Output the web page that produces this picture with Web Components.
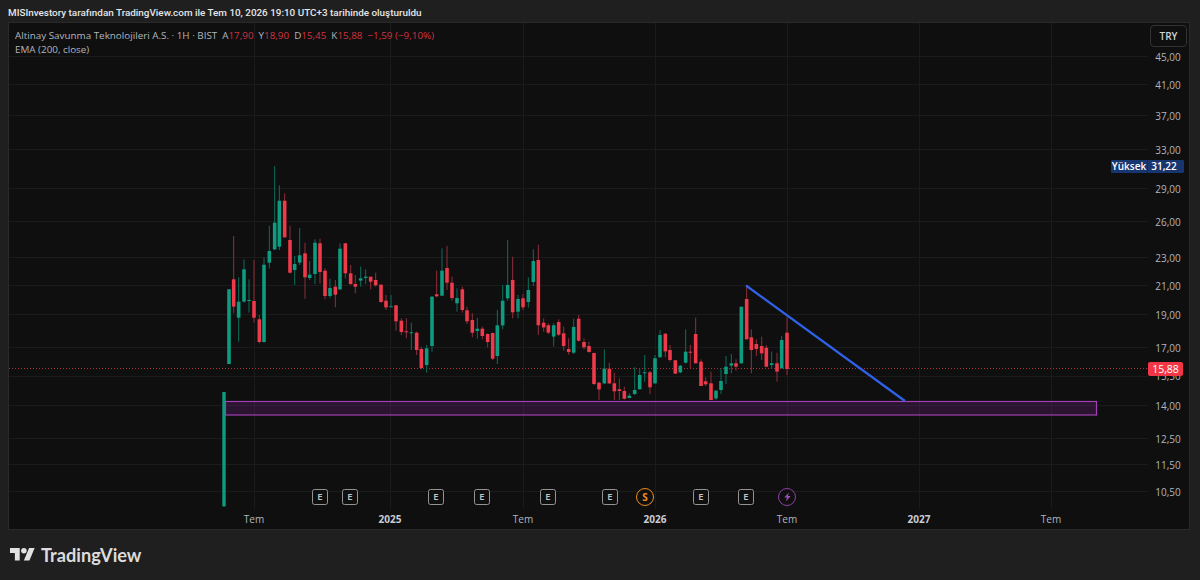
<!DOCTYPE html>
<html lang="tr"><head><meta charset="utf-8"><title>TradingView</title>
<style>html,body{margin:0;height:580px;overflow:hidden;background:#1f1f1f}</style></head>
<body><tv-page>
<tv-header>MISInvestory tarafından TradingView.com ile Tem 10, 2026 19:10 UTC+3 tarihinde oluşturuldu</tv-header>
<tv-chart></tv-chart>
<tv-footer></tv-footer>
</tv-page>
<script>
const FONT='"Open Sans","Noto Sans",sans-serif';
function el(name,css,html,fn){customElements.define(name,class extends HTMLElement{connectedCallback(){if(this.shadowRoot)return;const r=this.attachShadow({mode:'open'});r.innerHTML='<style>'+css+'</style>'+html(this);if(fn)fn(r,this);}});}
el('tv-page',`:host{display:flex;flex-direction:column;width:1200px;height:580px;box-sizing:border-box;padding:0 10px 0 8px;font-family:${FONT};color:#d1d4dc}`,()=>'<slot></slot>');
el('tv-header',`:host{display:flex;align-items:center;height:22px;box-sizing:border-box;padding-top:3px;font:500 9.9px Roboto,${FONT};color:#e6e6e6;white-space:nowrap}`,()=>'<slot></slot>');
el('tv-footer',`:host{display:flex;align-items:center;gap:6px;height:50px;padding-left:2px}svg{width:25px;height:20px;fill:#e2e2e2;display:block}span{font:700 18.2px Lato,"Open Sans",sans-serif;color:#dcdcdc;letter-spacing:0}`,
()=>'<svg viewBox="0 0 36 28"><path d="M14 22H7V11H0V4h14v18ZM28 22h-8l7.5-18h8L28 22Z"/><circle cx="20" cy="8" r="4"/></svg><span>TradingView</span>');
el('tv-legend',`:host{position:absolute;left:6px;top:5px;display:block;font:400 9.85px/14px ${FONT};color:#b2b5be;white-space:nowrap}b{font-weight:400;color:#cf3343}i{font-style:normal;margin-left:5px}`,
()=>'<div>Altinay Savunma Teknolojileri A.S. · 1H · BIST<i>A</i><b>17,90</b><i>Y</i><b>18,90</b><i>D</i><b>15,45</b><i>K</i><b>15,88</b><i></i><b>−1,59 (−9,10%)</b></div><div>EMA (200, close)</div>');
const PRICES=[['45,00',56],['41,00',84],['37,00',115],['33,00',149],['29,00',188],['26,00',221],['23,00',257],['21,00',285],['19,00',314],['17,00',347],['15,50',375],['14,00',405],['12,50',438],['11,50',464],['10,50',491]];
el('tv-price-scale',`:host{display:block;position:relative;width:41px;font:400 10px ${FONT};color:#b2b5be}
.t{position:absolute;left:7px;width:26px;text-align:center;line-height:14px;white-space:nowrap}
.try{position:absolute;left:2px;top:2px;width:37px;height:22px;box-sizing:border-box;border:1px solid #333;border-radius:4px;display:flex;align-items:center;justify-content:center;background:#0f0f0f;color:#cfd2da;font-weight:600;font-size:10px}
.hi{position:absolute;right:5px;top:137px;height:13px;display:flex;background:#17356f;color:#fff;font-weight:600;font-size:10px;line-height:13px;border-radius:1px;z-index:2}
.hi span{white-space:nowrap;box-sizing:border-box;text-align:center}.hi span:first-child{width:37px;border-right:1px solid #0f2a5c}.hi span:last-child{width:36px;padding-right:4px}
.last{position:absolute;left:0;top:339px;width:35px;height:14px;background:#f23645;color:#fff;border-radius:2px;text-align:center;line-height:14px;font-weight:400;z-index:2;font-size:10.5px}`,
()=>'<div class="try">TRY</div>'+PRICES.map(p=>`<div class="t" style="top:${p[1]-29}px">${p[0]}</div>`).join('')+'<div class="hi"><span>Yüksek</span><span>31,22</span></div><div class="last">15,88</div>');
const TIMES=[['Tem',254],['2025',390,1],['Tem',523],['2026',655,1],['Tem',787],['2027',919,1],['Tem',1051]];
el('tv-time-scale',`:host{display:block;position:relative;grid-column:1/3;height:20px;font:400 10px ${FONT};color:#b2b5be}
span{position:absolute;top:3px;width:40px;margin-left:-20px;text-align:center;line-height:14px}.b{font-weight:700;color:#c9ccd4}`,
()=>TIMES.map(t=>`<span class="${t[2]?'b':''}" style="left:${t[1]-9}px">${t[0]}</span>`).join(''));
el('tv-mark',`:host{position:absolute;display:flex;align-items:center;justify-content:center;box-sizing:border-box;font:600 9.5px ${FONT};width:16px;height:16px;margin:-8px 0 0 -8px;color:#c4c4c4;border:1.5px solid #949494;border-radius:2.5px;background:#0f0f0f}
:host([k=s]){width:18px;height:18px;margin:-9px 0 0 -9px;border-color:#ee8d1d;color:#ee8d1d;border-radius:50%;font-weight:700;font-size:10px}
:host([k=f]){width:18px;height:18px;margin:-9px 0 0 -9px;border-color:#8f3fa8;border-radius:50%}
svg{width:9px;height:10px;fill:#9a4fb2;display:block}`,
h=>h.getAttribute('k')=='f'?'<svg viewBox="0 0 10 10"><path d="M6.6 0 1.4 5.6h3L3.2 10l5.4-6H5.5z"/></svg>':'<slot></slot>');

/* x,wickTop,bodyTop,bodyBottom,wickBottom,g(reen)/r(ed) — coordinates measured in crops */
const A=[[57,388,388,612,612,'g'],[71,228,358,440,460,'r'],[86,352,425,473,545,'g'],[102,298,328,425,428,'g'],[117,358,420,423,458,'g'],[132,300,423,473,488,'r'],[148,465,478,546,550,'r'],[162,292,314,546,548,'g'],[178,197,273,308,325,'g'],[194,18,188,268,270,'g'],[208,76,122,260,270,'g'],[224,100,122,232,232,'r'],[240,197,240,338,340,'r'],[254,288,312,330,375,'g'],[269,204,286,308,315,'g'],[285,248,280,352,416,'r'],[299,303,344,354,360,'g'],[315,238,248,342,373,'g'],[330,236,250,336,370,'r'],[345,325,332,408,418,'r'],[360,356,384,408,414,'g'],[376,360,380,404,442,'r'],[390,250,266,388,390,'g'],[406,250,250,340,355,'r'],[422,315,340,372,375,'r'],[436,345,372,380,400,'r'],[452,320,355,362,380,'g'],[467,328,350,354,372,'g'],[482,350,350,365,388,'r'],[497,338,360,376,380,'r'],[513,372,374,426,428,'r'],[528,405,422,442,450,'r'],[543,405,439,440,440,'g'],[558,435,436,484,512,'r']];
const B=[[4,265,272,306,315,'r'],[19,265,304,306,325,'r'],[34,278,307,310,360,'g'],[50,305,308,360,375,'r'],[64,350,357,414,418,'r'],[80,345,355,405,428,'g'],[96,198,200,348,365,'g'],[110,122,193,199,202,'r'],[126,55,122,197,198,'g'],[141,47,114,158,180,'r'],[156,140,158,204,212,'r'],[171,175,204,220,245,'g'],[187,170,178,240,248,'r'],[201,230,241,274,282,'r'],[217,250,270,308,322,'r'],[232,263,296,303,326,'g'],[247,290,296,318,328,'r'],[263,310,312,336,352,'r'],[278,308,309,386,390,'r'],[292,240,286,378,402,'g'],[308,165,212,286,298,'g'],[323,30,165,205,212,'g'],[338,80,150,247,265,'r'],[354,195,207,245,265,'g'],[369,192,205,232,240,'r'],[385,142,180,216,233,'g'],[400,58,93,156,168,'g'],[415,44,90,286,315,'r'],[431,265,278,292,305,'r'],[445,280,286,308,312,'r'],[461,280,286,320,350,'g'],[476,268,276,314,318,'r'],[491,290,310,348,362,'r'],[506,325,357,366,374,'r'],[521,266,291,368,372,'g'],[536,255,266,332,335,'r'],[552,325,336,352,358,'r'],[567,335,348,366,368,'r'],[582,368,369,462,465,'r']];
const C=[[27,305,308,328,360,'r'],[43,208,266,310,312,'g'],[58,248,266,310,312,'r'],[73,278,310,334,360,'r'],[88,295,328,333,360,'r'],[103,320,333,356,358,'r'],[118,340,347,354,355,'g'],[134,262,330,342,345,'g'],[149,265,285,328,328,'g'],[164,225,277,279,305,'g'],[180,272,277,322,342,'r'],[195,225,235,310,312,'g'],[210,150,165,232,232,'g'],[226,160,161,214,232,'r'],[240,195,210,240,245,'r'],[256,240,241,281,282,'r'],[271,255,257,277,280,'g'],[287,148,215,248,250,'g'],[301,195,215,218,265,'r'],[317,113,162,250,250,'r'],[333,238,245,318,318,'r'],[347,292,304,313,318,'r'],[363,275,310,360,360,'r'],[378,330,332,355,360,'g'],[393,265,303,330,342,'g'],[408,228,260,282,312,'g'],[424,222,250,257,280,'g'],[438,238,250,260,272,'r'],[454,80,80,250,250,'g'],[470,15,57,178,178,'r'],[484,148,172,210,280,'r'],[499,178,192,207,228,'r'],[515,170,198,220,240,'r'],[529,195,203,260,262,'r'],[545,215,250,255,265,'g'],[561,218,250,275,305,'r'],[575,168,180,265,265,'g'],[591,112,158,267,285,'r']];
const all=[...A.map(c=>[210,160,c]),...B.map(c=>[400,230,c]),...C.map(c=>[590,280,c])];
function candles(){let s='';
 const col={g:'#0f9b80',r:'#ef3a4b'},wc={g:'#0b6e5c',r:'#8e2f3b'};
 for(const [ox,oy,c] of all){const x=ox+c[0]/3,[wt,bt,bb,wb]=[c[1],c[2],c[3],c[4]].map(v=>oy+v/3);
  s+=`<rect x="${(x-.5).toFixed(2)}" y="${wt.toFixed(1)}" width="1" height="${(wb-wt).toFixed(1)}" fill="${wc[c[5]]}"/>`;
  s+=`<rect x="${(x-1.8).toFixed(2)}" y="${bt.toFixed(1)}" width="3.6" height="${Math.max(bb-bt,1).toFixed(1)}" fill="${col[c[5]]}"/>`;}
 return s;}
const GX=[254,390,523,655,787,919,1051],GY=[56,84,115,149,188,221,257,285,314,347,376,405,438,464,491];
el('tv-plot',`:host{display:block;position:relative;overflow:hidden}svg{position:absolute;inset:0;width:100%;height:100%;display:block}`,
()=>`<svg viewBox="9 23 1139 486">
${GX.map(x=>`<line x1="${x}.5" x2="${x}.5" y1="23" y2="510" stroke="#1b1b1b"/>`).join('')}
${GY.map(y=>`<line x1="9" x2="1148" y1="${y}.5" y2="${y}.5" stroke="#1b1b1b"/>`).join('')}
<line x1="9" x2="1149" y1="368.5" y2="368.5" stroke="#a8303d" stroke-dasharray="1 2"/>
<rect x="222.3" y="392" width="3.4" height="114.5" fill="#0f9b80"/>
<rect x="225.5" y="401.5" width="871" height="13.5" fill="rgba(156,39,176,.2)" stroke="#a23fb5" stroke-width="1.2"/>
${candles()}
<line x1="746" y1="285.5" x2="905" y2="401" stroke="#2f62e8" stroke-width="2.2"/>
</svg><tv-legend></tv-legend>
<tv-mark style="left:311px;top:473.5px">E</tv-mark><tv-mark style="left:341px;top:473.5px">E</tv-mark><tv-mark style="left:427px;top:473.5px">E</tv-mark><tv-mark style="left:473px;top:473.5px">E</tv-mark><tv-mark style="left:539px;top:473.5px">E</tv-mark><tv-mark style="left:601px;top:473.5px">E</tv-mark><tv-mark k="s" style="left:636px;top:473.5px">S</tv-mark><tv-mark style="left:692px;top:473.5px">E</tv-mark><tv-mark style="left:737px;top:473.5px">E</tv-mark><tv-mark k="f" style="left:778px;top:473.5px"></tv-mark>`);
el('tv-chart',`:host{display:grid;grid-template-columns:1fr 41px;grid-template-rows:1fr 20px;height:508px;box-sizing:border-box;border:1px solid #2a2a2a;background:#0f0f0f}`,
()=>'<tv-plot></tv-plot><tv-price-scale></tv-price-scale><tv-time-scale></tv-time-scale>');
</script></body></html>
